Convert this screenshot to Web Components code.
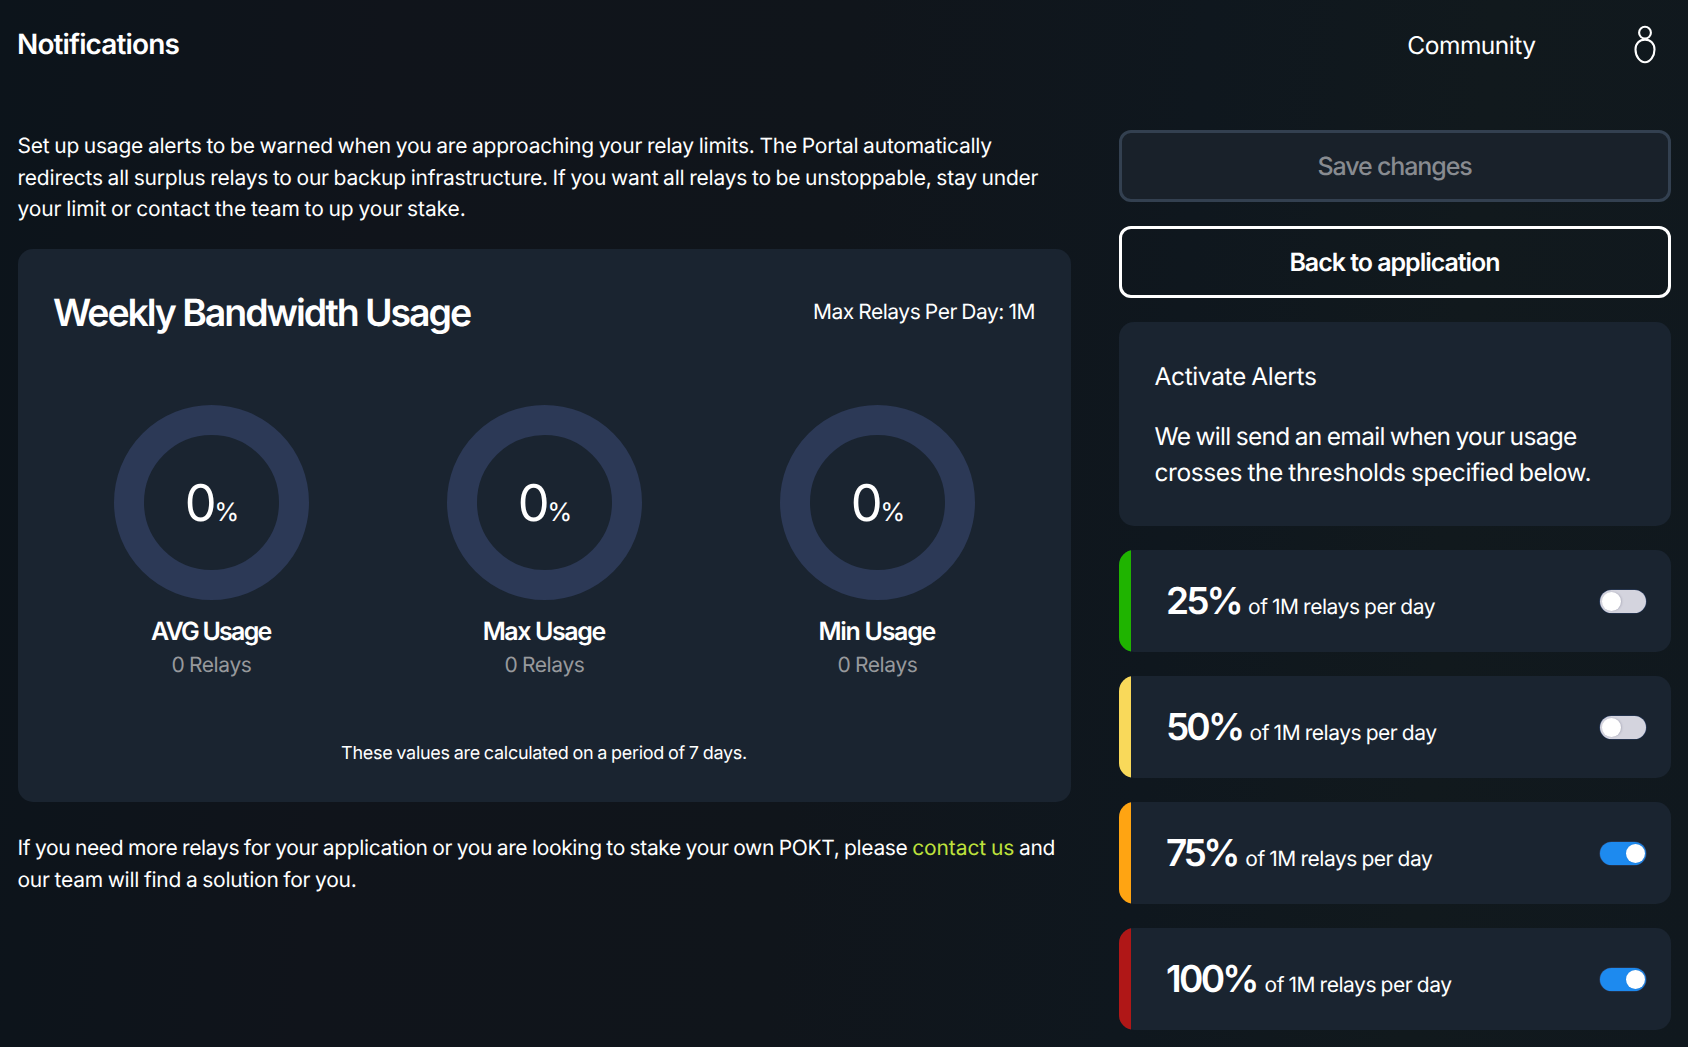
<!DOCTYPE html>
<html lang="en">
<head>
<meta charset="utf-8">
<title>Notifications</title>
<style>
html,body{margin:0;height:100%}
body{font-family:Inter,"Liberation Sans",sans-serif;color:#fff;overflow:hidden;text-rendering:geometricPrecision;
background:linear-gradient(95deg,#0c141b 0,#10141b 22%,#10151b 48%,#0f171e 68%,#11191d 84%,#10181e 100%)}
</style>
</head>
<body>
<notifications-page></notifications-page>

<script>
const define = (name, html, setup) => {
  const template = document.createElement('template');
  template.innerHTML = html;
  customElements.define(name, class extends HTMLElement {
    constructor() {
      super();
      this.attachShadow({ mode: 'open' }).append(template.content.cloneNode(true));
    }
    connectedCallback() { if (setup) setup(this, this.shadowRoot); }
  });
};

/* One unbroken line of text with its own tracking; "strong" keeps normal word gaps */
define('text-line', `
<style>
:host{display:block;white-space:nowrap;word-spacing:-.043em}
:host([strong]){word-spacing:0}
</style><slot></slot>`, el => { el.style.letterSpacing = el.getAttribute('track') + 'px'; });

define('page-header', `
<style>
:host{display:flex;align-items:center;height:89px}
h1{margin:-1px 0 0 -1px;font-size:28px;font-weight:600;line-height:40px}
nav{display:flex;align-items:center;margin-left:auto}
a{font-size:24.5px;line-height:36px;margin-top:1px}
svg{display:block;margin:0 15px 0 98.5px}
</style>
<h1><text-line strong track="-0.88">Notifications</text-line></h1>
<nav>
<a><text-line track="-0.5">Community</text-line></a>
<svg width="22" height="40" viewBox="0 0 22 40" fill="none" stroke="#fff" stroke-width="2.1"><circle cx="11" cy="7.7" r="5.9"/><path d="M11 14.6C5.6 14.6 1.5 18.6 1.5 24.4C1.5 31.3 5.9 37.2 11 37.2C16.1 37.2 20.5 31.3 20.5 24.4C20.5 18.6 16.4 14.6 11 14.6Z"/></svg>
</nav>`);

define('outline-button', `
<style>
:host{display:flex;height:72px;box-sizing:border-box;border:3px solid #fff;border-radius:12px;align-items:center;justify-content:center;font-size:25px;font-weight:600;line-height:36px;padding:2px 1px 0 0}
:host([disabled]){border-color:#334050;background:#19212a;color:#888b90;font-weight:500}
</style><slot></slot>`);

define('surface-card', `
<style>
:host{display:block;box-sizing:border-box;background:#1a2430;border-radius:15px}
</style><slot></slot>`);

define('usage-dial', `
<style>
:host{display:flex;flex-direction:column;align-items:center}
.dial{display:grid;place-items:center}
.dial>*{grid-area:1/1}
svg{display:block}
.value{line-height:197px;height:195px;font-size:50.5px;font-weight:400;letter-spacing:-2.2px;white-space:nowrap;padding-left:1px}
.value small{font-size:25.5px;font-weight:400;letter-spacing:0}
.name{font-size:25px;font-weight:600;line-height:34px;margin:15px 1.5px 0 0}
.count{font-size:21px;line-height:32px;margin-top:.5px;color:#97999c}
</style>
<div class="dial">
<svg width="195" height="195" viewBox="0 0 195 195"><circle cx="97.5" cy="97.5" r="82.5" fill="none" stroke="#2c3956" stroke-width="30"/></svg>
<div class="value">0<small>%</small></div>
</div>
<div class="name"><slot></slot></div>
<div class="count"><text-line track="-0.38">0 Relays</text-line></div>`);

define('usage-panel', `
<style>
:host{display:block}
surface-card{height:553px;padding:41px 27px 0}
header{display:flex;justify-content:space-between;align-items:center;height:44px;padding:0 9px 0 8px}
h2{margin:4px 0 0;font-size:37.5px;font-weight:600;line-height:44px}
.max{font-size:21px;line-height:32px;margin-top:1px}
.dials{display:grid;grid-template-columns:repeat(3,1fr);margin-top:71px}
.note{display:flex;justify-content:center;font-size:18px;line-height:32px;margin-top:56px;padding-right:1px}
</style>
<surface-card>
<header><h2><text-line strong track="-2.07">Weekly Bandwidth Usage</text-line></h2><div class="max"><text-line track="-0.48">Max Relays Per Day: 1M</text-line></div></header>
<div class="dials">
<usage-dial><text-line strong track="-1.75">AVG Usage</text-line></usage-dial>
<usage-dial><text-line strong track="-1.41">Max Usage</text-line></usage-dial>
<usage-dial><text-line strong track="-1.29">Min Usage</text-line></usage-dial>
</div>
<div class="note"><text-line track="-0.298">These values are calculated on a period of 7 days.</text-line></div>
</surface-card>`);

define('toggle-switch', `
<style>
:host{display:flex;align-items:center;box-sizing:border-box;width:46px;height:23px;border-radius:12px;background:#d4d4de;padding:0 1.5px 0 2px;box-shadow:0 0 0 .6px #2e4268}
:host([on]){background:#1d8aef;justify-content:flex-end}
i{width:19px;height:19px;border-radius:50%;background:#fff;box-shadow:1px 0 2px rgba(60,60,90,.22)}
</style><i></i>`);

define('threshold-row', `
<style>
:host{display:block}
surface-card{display:flex;align-items:center;height:102px;overflow:hidden;padding-right:25px}
.stripe{width:12px;height:100%}
.label{line-height:44px;font-size:37px;margin-left:35px;padding-top:7px;white-space:nowrap;flex:1;display:flex;align-items:baseline}
b{font-weight:600}
.rest{font-size:21px}
</style>
<surface-card><div class="stripe"></div><div class="label"><b></b><span class="rest"><text-line track="-0.465">of 1M relays per day</text-line></span></div><toggle-switch></toggle-switch></surface-card>`,
(el, root) => {
  const pct = root.querySelector('b');
  pct.textContent = el.getAttribute('value');
  pct.style.width = el.getAttribute('value-width') + 'px';
  pct.style.letterSpacing = el.getAttribute('track') + 'px';
  root.querySelector('.stripe').style.background = el.getAttribute('color');
  root.querySelector('toggle-switch').toggleAttribute('on', el.hasAttribute('on'));
});

define('alerts-card', `
<style>
:host{display:block}
surface-card{height:204px;padding:36px 36px 0 35.5px;font-size:24.5px;line-height:36px}
p{margin:0 0 24px}
</style>
<surface-card><p><text-line track="-0.37">Activate Alerts</text-line></p>
<text-line track="-0.69">We will send an email when your usage</text-line>
<text-line track="-0.435">crosses the thresholds specified below.</text-line></surface-card>`);

define('notifications-page', `
<style>
:host{display:block;padding:0 17px 0 18px}
main{display:grid;grid-template-columns:1053px 552px;column-gap:48px;margin-top:41px;align-items:start}
p{margin:0 0 0 -.5px;font-size:21px;line-height:31.5px}
.intro{box-sizing:border-box;height:119px;padding-top:1px}
.outro{margin-top:30.5px;line-height:32px}
a{color:#bfe23c;letter-spacing:-.1px}
aside{display:flex;flex-direction:column;gap:24px}
</style>
<page-header></page-header>
<main>
<section>
<p class="intro">
<text-line track="-0.224">Set up usage alerts to be warned when you are approaching your relay limits. The Portal automatically</text-line>
<text-line track="-0.217">redirects all surplus relays to our backup infrastructure. If you want all relays to be unstoppable, stay under</text-line>
<text-line track="-0.12">your limit or contact the team to up your stake.</text-line>
</p>
<usage-panel></usage-panel>
<p class="outro">
<text-line track="-0.345">If you need more relays for your application or you are looking to stake your own POKT, please <a>contact us</a> and</text-line>
<text-line track="-0.23">our team will find a solution for you.</text-line>
</p>
</section>
<aside>
<outline-button disabled><text-line strong track="-1.12">Save changes</text-line></outline-button>
<outline-button><text-line strong track="-1.03">Back to application</text-line></outline-button>
<alerts-card></alerts-card>
<threshold-row value="25%" value-width="82" track="-2.9" color="#1fb400"></threshold-row>
<threshold-row value="50%" value-width="83.6" track="-2.9" color="#f9d95a"></threshold-row>
<threshold-row value="75%" value-width="79.3" track="-3.5" color="#ffa412" on></threshold-row>
<threshold-row value="100%" value-width="98.5" track="-2.7" color="#b01717" on></threshold-row>
</aside>
</main>`);
</script>
</body>
</html>
